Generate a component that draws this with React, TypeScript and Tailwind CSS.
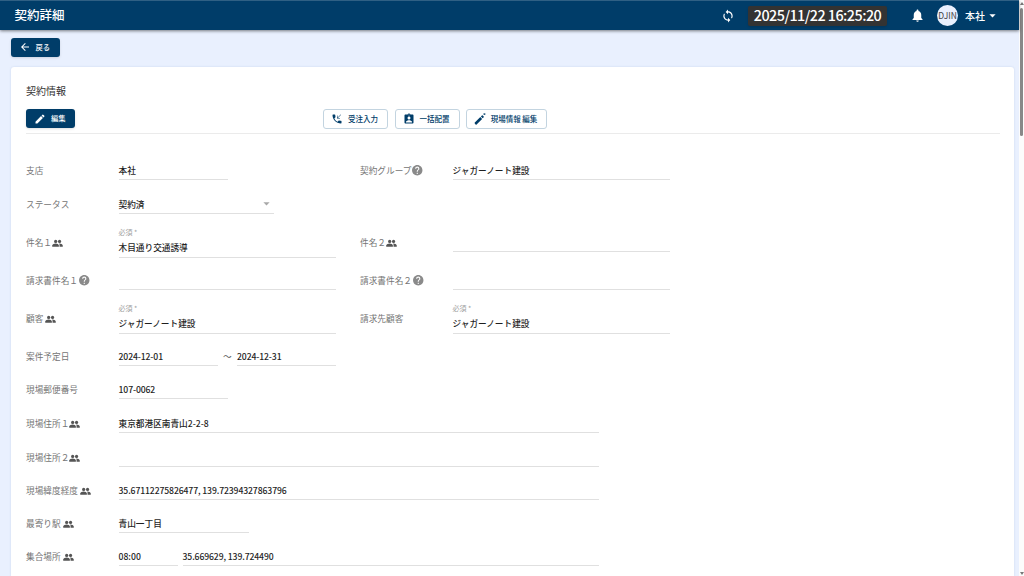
import React from "react";
import {
  MdArrowBack,
  MdArrowDropDown,
  MdAssignmentInd,
  MdEdit,
  MdHelp,
  MdNotifications,
  MdPhoneCallback,
  MdSync,
} from "react-icons/md";

type FieldProps = { value?: string; width: string; required?: boolean; select?: boolean; numeric?: boolean };

function Field({ value = "", width, required, select, numeric }: FieldProps) {
  return (
    <div
      className={`${width} ${required ? "h-[31px]" : "h-[19px]"} flex shrink-0 flex-col justify-end border-b border-[#e0e0e0] font-medium text-[#1f1f1f]`}
    >
      {required && (
        <span className="mb-px text-[7px] leading-[10px] font-normal text-[#a0a0a0]">必須 *</span>
      )}
      <div className={`flex items-center justify-between leading-[18px] ${required ? "h-[19px] pb-px" : "h-[18px]"}`}>
        <span className={`whitespace-nowrap ${numeric ? "tracking-[-0.12px]" : ""}`}>{value}</span>
        {select && <MdArrowDropDown className="size-[15px] text-[#a8a8a8]" />}
      </div>
    </div>
  );
}

function PeopleIcon() {
  return (
    <svg viewBox="0 0 24 24" className="mt-[2px] size-[11px] fill-[#555555]">
      <circle cx="8" cy="7.5" r="3.5" />
      <circle cx="16.5" cy="7.5" r="3.5" />
      <path d="M0.5 19v-2.500C.5 13.500 5 12 8 12s7 1.500 7 4.500V19z" />
      <path d="M16.500 19h7v-2.500c0-3-4.300-4.500-7.300-4.500l-.9.100c1 .9 1.200 2.500 1.200 4.400z" />
    </svg>
  );
}

type LabelProps = { text: string; icon?: "people" | "help"; className: string };

function Label({ text, icon, className }: LabelProps) {
  return (
    <div className={`${className} flex shrink-0 items-center text-[#757575]`}>
      <span className="whitespace-pre">{text}</span>
      {icon === "people" && <PeopleIcon />}
      {icon === "help" && <MdHelp className="size-[12.5px] text-[#8a8a8a]" />}
    </div>
  );
}

function Row({ height, children }: { height: string; children: React.ReactNode }) {
  return <div className={`${height} flex items-center`}>{children}</div>;
}

function WandIcon() {
  return (
    <svg viewBox="0 0 24 24" className="size-[12px] fill-current">
      <path d="M1.6 19.2 12.6 8.2l3.6 3.6L5.2 22.8a1.4 1.4 0 0 1-2 0l-1.6-1.6a1.4 1.4 0 0 1 0-2z" />
      <path d="m13.8 7 2-2a1.2 1.2 0 0 1 1.7 0l1.9 1.9a1.2 1.2 0 0 1 0 1.7l-2 2z" />
      <path d="m23 0-.9 2.1.9 2.1-2.1-.9-2.1.9.9-2.1-.9-2.1 2.1.9z" />
    </svg>
  );
}

const L = "w-[92.5px]";
const R = "ml-[24px] w-[92.5px]";
const HALF = "w-[217.5px]";

function OutlineButton({ width, icon, children }: { width: string; icon: React.ReactNode; children: React.ReactNode }) {
  return (
    <button
      className={`${width} flex h-[20px] items-center rounded-[3px] border border-[#c3d4e0] pl-[7px] text-[7.5px] font-medium text-[#003d69]`}
    >
      {icon}
      <span className="flex-1 pr-[4px] text-center whitespace-nowrap">{children}</span>
    </button>
  );
}

export default function App() {
  return (
    <div className="flex h-[576px] w-[1024px] overflow-hidden bg-white font-['Noto_Sans_CJK_JP','Noto_Sans',sans-serif] text-[8.67px]">
      <div className="flex w-[1019px] flex-col bg-[#e9f0fe]">
        <header className="z-10 flex h-[30px] shrink-0 items-center border-t border-[#2f6084] bg-[#003d69] pr-[19px] pl-[14.5px] text-white shadow-[0_1px_3px_rgba(0,0,0,0.5)]">
          <h1 className="flex-1 text-[12.5px] font-medium">契約詳細</h1>
          <MdSync className="size-[14px]" />
          <div className="ml-[13px] flex h-[20px] w-[139px] items-center justify-center rounded-[2px] bg-[#333333] pb-px text-[14.4px] font-medium tracking-[-0.55px] whitespace-nowrap shadow">
            2025/11/22 16:25:20
          </div>
          <MdNotifications className="ml-[23px] size-[15px]" />
          <div className="ml-[12px] flex size-[21px] items-center justify-center rounded-full bg-[#e9f0fe] text-[8.5px] text-[#444444]">
            DJIN
          </div>
          <span className="ml-[7px] text-[10px] font-medium">本社</span>
          <MdArrowDropDown className="size-[15px]" />
        </header>

        <div className="flex h-[37px] shrink-0 items-center pl-[11px]">
          <button className="mb-[3px] flex h-[19px] w-[49px] items-center rounded-[3px] bg-[#003d69] pl-[8px] text-[7.3px] font-medium text-white shadow">
            <MdArrowBack className="size-[12px]" />
            <span className="ml-[4.5px]">戻る</span>
          </button>
        </div>

        <main className="mr-[5px] ml-[11px] flex-1 rounded-t-[3px] bg-white pl-[15px] shadow-[0_0_2px_rgba(120,150,200,0.3)]">
          <h2 className="pt-[16px] text-[10px] leading-[16px] text-[#333333]">契約情報</h2>
          <div className="mt-[10px] flex h-[25px] w-[974px] items-start border-b border-[#ebebeb]">
            <button className="flex h-[19px] w-[49px] items-center rounded-[3px] bg-[#003d69] pl-[8px] text-[7.3px] font-medium text-white shadow">
              <MdEdit className="size-[12px]" />
              <span className="ml-[5px]">編集</span>
            </button>
            <div className="ml-[248px] flex gap-[6.5px]">
              <OutlineButton width="w-[65px]" icon={<MdPhoneCallback className="size-[12px]" />}>
                受注入力
              </OutlineButton>
              <OutlineButton width="w-[65px]" icon={<MdAssignmentInd className="size-[12px]" />}>
                一括配置
              </OutlineButton>
              <OutlineButton width="w-[81px]" icon={<WandIcon />}>
                現場情報 編集
              </OutlineButton>
            </div>
          </div>

          <div className="pt-[20px]">
            <Row height="h-[33px]">
              <Label className={L} text="支店" />
              <Field width="w-[109.5px]" value="本社" />
              <Label className="ml-[132px] w-[92.5px]" text="契約グループ" icon="help" />
              <Field width={HALF} value="ジャガーノート建設" />
            </Row>
            <Row height="h-[34px]">
              <Label className={L} text="ステータス" />
              <Field width="w-[155px]" value="契約済" select />
            </Row>
            <Row height="h-[43px]">
              <Label className={L} text="件名１" icon="people" />
              <Field width={HALF} value="木目通り交通誘導" required />
              <Label className={R} text="件名２" icon="people" />
              <Field width={HALF} />
            </Row>
            <Row height="h-[33px]">
              <Label className={L} text="請求書件名１" icon="help" />
              <Field width={HALF} />
              <Label className={R} text="請求書件名２" icon="help" />
              <Field width={HALF} />
            </Row>
            <Row height="h-[43px]">
              <Label className={L} text="顧客 " icon="people" />
              <Field width={HALF} value="ジャガーノート建設" required />
              <Label className={R} text="請求先顧客" />
              <Field width={HALF} value="ジャガーノート建設" required />
            </Row>
            <Row height="h-[32px]">
              <Label className={L} text="案件予定日" />
              <Field width="w-[99px]" value="2024-12-01" numeric />
              <span className="w-[19.5px] text-center text-[#555555]">～</span>
              <Field width="w-[99px]" value="2024-12-31" numeric />
            </Row>
            <Row height="h-[34px]">
              <Label className={L} text="現場郵便番号" />
              <Field width="w-[109.5px]" value="107-0062" numeric />
            </Row>
            <Row height="h-[34px]">
              <Label className={L} text="現場住所１" icon="people" />
              <Field width="w-[480.5px]" value="東京都港区南青山2-2-8" />
            </Row>
            <Row height="h-[35px]">
              <Label className={L} text="現場住所２" icon="people" />
              <Field width="w-[480.5px]" />
            </Row>
            <Row height="h-[31px]">
              <Label className={L} text="現場緯度経度 " icon="people" />
              <Field width="w-[480.5px]" value="35.67112275826477, 139.72394327863796" numeric />
            </Row>
            <Row height="h-[34px]">
              <Label className={L} text="最寄り駅 " icon="people" />
              <Field width="w-[130px]" value="青山一丁目" />
            </Row>
            <Row height="h-[32px]">
              <Label className={L} text="集合場所 " icon="people" />
              <Field width="w-[59.5px]" value="08:00" />
              <div className="w-[4.5px]" />
              <Field width="w-[416.5px]" value="35.669629, 139.724490" numeric />
            </Row>
          </div>
        </main>
      </div>

      <div className="flex w-[5px] flex-col items-center justify-between bg-[#fcfcfc]">
        <div className="flex flex-col items-center">
          <svg viewBox="0 0 4 3" className="mt-[2px] h-[3px] w-[4px] fill-[#777777]">
            <path d="M2 0L4 3H0z" />
          </svg>
          <div className="mt-[3px] h-[128px] w-[3px] rounded-full bg-[#888888]" />
        </div>
        <svg viewBox="0 0 4 3" className="mb-px h-[3px] w-[4px] fill-[#777777]">
          <path d="M0 0H4L2 3z" />
        </svg>
      </div>
    </div>
  );
}
